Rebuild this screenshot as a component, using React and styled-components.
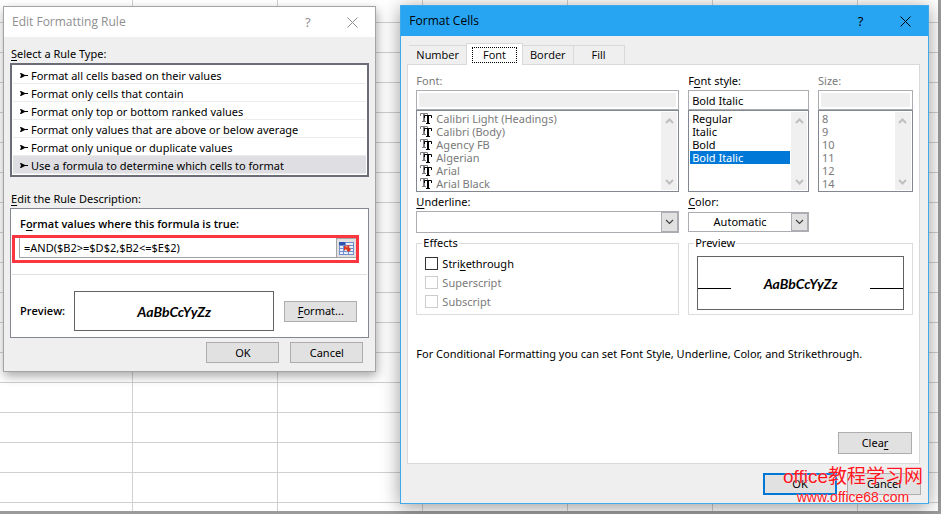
import React, { useState } from 'react'
import styled, { createGlobalStyle, css } from 'styled-components'

const rules = [
    'Format all cells based on their values',
    'Format only cells that contain',
    'Format only top or bottom ranked values',
    'Format only values that are above or below average',
    'Format only unique or duplicate values',
    'Use a formula to determine which cells to format',
]

const fonts = ['Calibri Light (Headings)', 'Calibri (Body)', 'Agency FB', 'Algerian', 'Arial', 'Arial Black']
const styles = ['Regular', 'Italic', 'Bold', 'Bold Italic']
const sizes = ['8', '9', '10', '11', '12', '14']
const tabs = ['Number', 'Font', 'Border', 'Fill']

function CloseIcon() {
    return (
        <svg width="11" height="11" viewBox="0 0 11 11" fill="none" stroke="currentColor" aria-hidden="true">
            <path d="M0.5 0.5L10.5 10.5M10.5 0.5L0.5 10.5" />
        </svg>
    )
}

function Chevron({ up, thick }) {
    return (
        <svg width="9" height="6" viewBox="0 0 9 6" fill="none" stroke="currentColor" strokeWidth={thick ? 2 : 1.2} aria-hidden="true">
            <path d={up ? 'M1 5L4.5 1.5L8 5' : 'M1 1L4.5 4.5L8 1'} />
        </svg>
    )
}

function RuleArrow() {
    return (
        <svg width="8" height="5" viewBox="0 0 8 5" aria-hidden="true">
            <path d="M0 0H1L5 2H8V3H5L1 5H0L1 2.5Z" fill="#000" />
        </svg>
    )
}

function FontIcon() {
    return (
        <svg width="12" height="13" viewBox="0 0 12 13" fill="none" aria-hidden="true">
            <path d="M0.5 4V1.5H7.5V4M2 9.5H6" stroke="#808080" />
            <path d="M4 2V9" stroke="#808080" strokeWidth="2" />
            <path d="M4.5 6V3.5H11.5V6M6 11.5H10" stroke="#000" />
            <path d="M8 4V11" stroke="#000" strokeWidth="2" />
        </svg>
    )
}

function RangeIcon() {
    return (
        <svg width="15" height="13" viewBox="0 0 15 13" aria-hidden="true">
            <rect width="15" height="13" fill="#6f8fd0" />
            <rect width="6" height="3" fill="#2c55b0" />
            <path d="M1 4H4V6H1ZM5 4H9V6H5ZM10 4H14V6H10ZM1 7H4V9H1ZM5 7H9V9H5ZM11 7H14V9H11ZM1 10H4V12H1ZM5 10H9V12H5ZM10 10H14V12H10ZM7 1H14V3H7Z" fill="#e9effb" />
            <path d="M5 4L11 3L10 5L12 8L9 10L7 7L5 9Z" fill="#d9391f" />
            <path d="M6 4L9 4L8 6Z" fill="#f08a70" />
        </svg>
    )
}

function TitleBar({ title, active }) {
    return (
        <Title $active={active}>
            <h1>{title}</h1>
            <TitleButton aria-label="Help">?</TitleButton>
            <TitleButton aria-label="Close"><CloseIcon /></TitleButton>
        </Title>
    )
}

function ListBox({ label, items, selected, disabled, icon, onSelect }) {
    return (
        <List>
            <Options role="listbox" aria-label={label} aria-disabled={disabled}>
                {items.map((item) => (
                    <Option
                        key={item}
                        role="option"
                        aria-selected={item === selected}
                        $selected={item === selected}
                        $disabled={disabled}
                        onClick={() => !disabled && onSelect(item)}
                    >
                        {icon && <FontIcon />}
                        {item}
                    </Option>
                ))}
            </Options>
            <ScrollBar>
                <button aria-label={`Scroll ${label} up`}><Chevron up thick /></button>
                <button aria-label={`Scroll ${label} down`}><Chevron thick /></button>
            </ScrollBar>
        </List>
    )
}

function EditRuleDialog() {
    const [rule, setRule] = useState(rules[5])
    const [formula, setFormula] = useState('=AND($B2>=$D$2,$B2<=$E$2)')

    return (
        <RuleWindow role="dialog" aria-label="Edit Formatting Rule">
            <TitleBar title="Edit Formatting Rule" />
            <RuleBody>
                <SectionLabel><u>S</u>elect a Rule Type:</SectionLabel>
                <RuleList role="listbox" aria-label="Select a Rule Type">
                    {rules.map((item) => (
                        <Rule
                            key={item}
                            role="option"
                            aria-selected={item === rule}
                            $selected={item === rule}
                            onClick={() => setRule(item)}
                        >
                            <RuleArrow />
                            {item}
                        </Rule>
                    ))}
                </RuleList>
                <SectionLabel $second><u>E</u>dit the Rule Description:</SectionLabel>
                <Description>
                    <FormulaLabel htmlFor="formula">F<u>o</u>rmat values where this formula is true:</FormulaLabel>
                    <FormulaBox>
                        <input id="formula" value={formula} onChange={(e) => setFormula(e.target.value)} />
                        <button aria-label="Collapse dialog"><RangeIcon /></button>
                    </FormulaBox>
                    <Divider />
                    <PreviewRow>
                        <b>Preview:</b>
                        <Sample>AaBbCcYyZz</Sample>
                        <Button><span><u>F</u>ormat...</span></Button>
                    </PreviewRow>
                </Description>
                <RuleButtons>
                    <Button>OK</Button>
                    <Button>Cancel</Button>
                </RuleButtons>
            </RuleBody>
        </RuleWindow>
    )
}

function FormatCellsDialog() {
    const [tab, setTab] = useState('Font')
    const [style, setStyle] = useState('Bold Italic')

    return (
        <CellsWindow role="dialog" aria-label="Format Cells">
            <TitleBar title="Format Cells" active />
            <CellsBody>
                <Tabs role="tablist">
                    {tabs.map((name) => (
                        <Tab key={name} role="tab" aria-selected={name === tab} $selected={name === tab} onClick={() => setTab(name)}>
                            <span>{name}</span>
                        </Tab>
                    ))}
                </Tabs>
                <Panel role="tabpanel">
                    <Columns>
                        <Field>
                            <FieldLabel htmlFor="font" $disabled>Font:</FieldLabel>
                            <TextBox id="font" disabled />
                            <ListBox label="Font" items={fonts} disabled icon />
                        </Field>
                        <Field>
                            <FieldLabel htmlFor="style">F<u>o</u>nt style:</FieldLabel>
                            <TextBox id="style" value={style} onChange={(e) => setStyle(e.target.value)} />
                            <ListBox label="Font style" items={styles} selected={style} onSelect={setStyle} />
                        </Field>
                        <Field>
                            <FieldLabel htmlFor="size" $disabled>Size:</FieldLabel>
                            <TextBox id="size" disabled />
                            <ListBox label="Size" items={sizes} disabled />
                        </Field>
                        <Field>
                            <FieldLabel htmlFor="underline"><u>U</u>nderline:</FieldLabel>
                            <Combo>
                                <select id="underline" defaultValue="">
                                    <option value=""></option>
                                    <option>Single</option>
                                    <option>Double</option>
                                </select>
                                <ComboArrow><Chevron /></ComboArrow>
                            </Combo>
                        </Field>
                        <Field>
                            <FieldLabel htmlFor="color"><u>C</u>olor:</FieldLabel>
                            <Combo $small>
                                <select id="color">
                                    <option>Automatic</option>
                                </select>
                                <ComboArrow><Chevron /></ComboArrow>
                            </Combo>
                        </Field>
                    </Columns>
                    <Groups>
                        <Group>
                            <legend>Effects</legend>
                            <Check><input type="checkbox" /><span>Stri<u>k</u>ethrough</span></Check>
                            <Check $disabled><input type="checkbox" disabled /><span>Superscript</span></Check>
                            <Check $disabled><input type="checkbox" disabled /><span>Subscript</span></Check>
                        </Group>
                        <Group>
                            <legend>Preview</legend>
                            <LinedSample>AaBbCcYyZz</LinedSample>
                        </Group>
                    </Groups>
                    <Note>For Conditional Formatting you can set Font Style, Underline, Color, and Strikethrough.</Note>
                    <ClearRow>
                        <Button $wide><span>Clea<u>r</u></span></Button>
                    </ClearRow>
                </Panel>
                <CellsButtons>
                    <Button $wide $primary>OK</Button>
                    <Button $wide>Cancel</Button>
                </CellsButtons>
            </CellsBody>
        </CellsWindow>
    )
}

function App() {
    return (
        <>
            <GlobalStyle />
            <Sheet>
                <EditRuleDialog />
                <FormatCellsDialog />
                <Watermark>
                    <strong>office教程学习网</strong>
                    <a href="#site">www.office68.com</a>
                </Watermark>
            </Sheet>
        </>
    )
}

export default App

const GlobalStyle = createGlobalStyle`
    * {
        box-sizing: border-box;
    }

    body {
        margin: 0;
        font-family: "Noto Sans", "Open Sans", sans-serif;
        font-size: 11px;
        line-height: 16px;
        color: #000;
    }

    button, input, select {
        margin: 0;
        padding: 0;
        border: none;
        border-radius: 0;
        font: inherit;
        color: inherit;
    }

    svg {
        flex: none;
        display: block;
    }

    u {
        text-underline-offset: 2px;
    }
`

const Sheet = styled.main`
    position: relative;
    display: flex;
    align-items: flex-start;
    gap: 24px;
    min-height: 100vh;
    padding: 5px 9px 7px 3px;
    border: solid #9b9b9b;
    border-width: 0 3px 3px 0;
    background-color: #fff;
    background-image:
        linear-gradient(to right, #d0d0d0 1px, transparent 1px),
        linear-gradient(to bottom, #d0d0d0 1px, transparent 1px);
    background-size: 145px 100%, 100% 30px;
    background-position: 132px 0, 0 22px;
`

const Window = styled.section`
    min-width: 0;
    border: 1px solid #a4a4a4;
    background-color: #efefef;
`

const RuleWindow = styled(Window)`
    flex: 373 1 0;
    margin-top: 1px;
    box-shadow: 1px 4px 10px rgba(0, 0, 0, 0.35);
`

const CellsWindow = styled(Window)`
    flex: 529 1 0;
    border-color: #3fa9ec;
    box-shadow: 0 3px 18px rgba(0, 0, 0, 0.4);
`

const Title = styled.header`
    display: flex;
    align-items: center;
    height: 30px;
    padding-left: 8px;
    background-color: ${({ $active }) => ($active ? '#27a5f3' : '#fff')};
    color: ${({ $active }) => ($active ? '#000' : '#8f8f8f')};

    h1 {
        flex: 1;
        margin: 0;
        font-family: "Open Sans", sans-serif;
        font-size: 12px;
        font-weight: 400;
    }
`

const TitleButton = styled.button`
    display: flex;
    align-items: center;
    justify-content: center;
    width: 45px;
    height: 30px;
    background: none;
    font-size: 13px;
`

const RuleBody = styled.div`
    padding: 9px 6px 8px;
`

const SectionLabel = styled.div`
    margin: ${({ $second }) => ($second ? '14px' : '0')} 0 1px;
    padding-left: 1px;
`

const RuleList = styled.ul`
    margin: 0;
    padding: 1px;
    border: 2px solid #6a6d75;
    background-color: #fff;
    list-style: none;
`

const Rule = styled.li`
    display: flex;
    align-items: center;
    gap: 3px;
    height: 18px;
    padding: 2px 0 0 7px;
    border-bottom: 1px solid #ececec;
    white-space: nowrap;
    background-color: ${({ $selected }) => ($selected ? '#dfdfe3' : '#fff')};
`

const Description = styled.div`
    padding: 7px 0 6px;
    border: 1px solid #828790;
    background-color: #fff;
`

const FormulaLabel = styled.label`
    display: block;
    margin-bottom: 3px;
    padding-left: 9px;
    font-family: "Open Sans", sans-serif;
    font-weight: 600;
`

const FormulaBox = styled.div`
    display: flex;
    align-items: flex-start;
    height: 28px;
    margin: 0 9px 0 1px;
    padding-left: 4px;
    border: 3px solid #fb3640;

    input {
        flex: 1;
        min-width: 0;
        height: 20px;
        padding-left: 4px;
        border: solid #a4a4a4;
        border-width: 0 0 1px 1px;
        outline: none;
    }

    button {
        display: flex;
        align-items: center;
        justify-content: center;
        width: 20px;
        height: 20px;
        border: solid #a4a4a4;
        border-width: 1px 0 1px 1px;
        background-color: #e1e1e1;
    }
`

const Divider = styled.hr`
    height: 1px;
    margin: 11px 1px 16px;
    border: none;
    background-color: #dfdfe3;
`

const PreviewRow = styled.div`
    display: flex;
    align-items: center;
    padding: 0 11px 0 9px;

    b {
        width: 54px;
        font-family: "Open Sans", sans-serif;
        font-weight: 600;
    }
`

const Sample = styled.div`
    display: flex;
    flex: 1;
    align-items: center;
    justify-content: center;
    height: 40px;
    margin-right: 10px;
    border: 1px solid #636363;
    font: italic 700 14px Lato, sans-serif;
`

const Button = styled.button`
    width: ${({ $wide }) => ($wide ? '74px' : '73px')};
    height: ${({ $wide }) => ($wide ? '22px' : '21px')};
    border: 1px solid #adadad;
    background-color: #e1e1e1;

    ${({ $primary }) => $primary && css`
        border: 2px solid #0078d7;
    `}
`

const RuleButtons = styled.div`
    display: flex;
    justify-content: flex-end;
    gap: 11px;
    padding: 4px 6px 0 0;
`

const CellsBody = styled.div`
    padding: 7px 8px 8px 6px;
`

const Tabs = styled.div`
    display: flex;
    align-items: flex-end;
    padding-left: 2px;
`

const Tab = styled.button`
    height: 19px;
    padding: 0 7px;
    border: solid #d9d9d9;
    border-width: 1px 1px 0 0;
    background-color: #efefef;
    font-family: "Open Sans", sans-serif;

    &:first-child {
        border-right: none;
    }

    &:last-child {
        padding: 0 18px;
    }

    ${({ $selected }) => $selected && css`
        z-index: 1;
        height: 22px;
        margin-bottom: -1px;
        padding: 0 5px;
        border-left-width: 1px;
        background-color: #fff;

        span {
            display: block;
            padding: 0 10px;
            border: 1px dotted #000;
            line-height: 14px;
        }
    `}
`

const Panel = styled.div`
    padding: 8px 6px 9px 8px;
    border: 1px solid #d9d9d9;
    background-color: #fff;
`

const Columns = styled.div`
    display: grid;
    grid-template-columns: 263fr 121fr 95fr;
    column-gap: 9px;
    row-gap: 2px;
`

const Field = styled.div`
    display: flex;
    flex-direction: column;
    min-width: 0;
`

const FieldLabel = styled.label`
    margin-bottom: 1px;
    color: ${({ $disabled }) => ($disabled ? '#7a7a7a' : '#000')};
`

const TextBox = styled.input`
    width: 100%;
    height: 20px;
    padding: 0 3px;
    border: 1px solid #abadb3;
    background-color: #fff;

    &:disabled {
        border-color: #abadb3;
        background-color: #efefef;
        box-shadow: inset 0 0 0 2px #fff;
    }
`

const List = styled.div`
    display: flex;
    height: 82px;
    padding: 1px;
    border: 1px solid #828790;
`

const Options = styled.ul`
    flex: 1;
    min-width: 0;
    margin: 0 1px 0 0;
    padding: 0;
    list-style: none;
`

const Option = styled.li`
    display: flex;
    gap: 4px;
    height: 13px;
    padding-left: 2px;
    line-height: 13px;
    white-space: nowrap;
    color: ${({ $selected, $disabled }) => ($selected ? '#fff' : $disabled ? '#7a7a7a' : '#000')};
    background-color: ${({ $selected }) => ($selected ? '#0078d7' : '#fff')};
`

const ScrollBar = styled.div`
    display: flex;
    flex-direction: column;
    justify-content: space-between;
    width: 16px;
    background-color: #f0f0f0;

    button {
        display: flex;
        align-items: center;
        justify-content: center;
        height: 17px;
        background: none;
        color: #bfbfbf;
    }
`

const Combo = styled.div`
    display: flex;
    height: ${({ $small }) => ($small ? '20px' : '22px')};
    margin-top: ${({ $small }) => ($small ? '1px' : '0')};
    border: 1px solid #abadb3;

    select {
        flex: 1;
        min-width: 0;
        margin-right: -17px;
        padding: 0 17px 0 0;
        appearance: none;
        background: none;
        text-align: center;
        text-align-last: center;
    }
`

const ComboArrow = styled.span`
    display: flex;
    align-items: center;
    justify-content: center;
    width: 17px;
    border: 1px solid #abadb3;
    background-color: #e1e1e1;
    color: #404040;
    pointer-events: none;
`

const Groups = styled.div`
    display: grid;
    grid-template-columns: 263fr 225fr;
    column-gap: 9px;
    margin-top: 2px;
`

const Group = styled.fieldset`
    min-width: 0;
    height: 80px;
    margin: 0;
    padding: 5px 8px 4px;
    border: 1px solid #dcdcdc;

    legend {
        margin-left: -3px;
        padding: 0 1px;
    }
`

const Check = styled.label`
    display: flex;
    align-items: center;
    gap: 4px;
    height: 19px;
    color: ${({ $disabled }) => ($disabled ? '#7a7a7a' : '#000')};

    legend + & {
        margin-top: -2px;
    }

    input {
        width: 13px;
        height: 13px;
        border: 1px solid ${({ $disabled }) => ($disabled ? '#cccccc' : '#333')};
        appearance: none;
        background-color: #fff;
    }

    input:checked {
        box-shadow: inset 0 0 0 2px #fff;
        background-color: #333;
    }
`

const LinedSample = styled(Sample)`
    height: 54px;
    margin: 0;
    justify-content: space-between;

    &:before, &:after {
        content: "";
        width: 33px;
        height: 1px;
        margin-top: 11px;
        background-color: #000;
    }
`

const Note = styled.p`
    margin: 31px 0 70px;
`

const ClearRow = styled.div`
    display: flex;
    justify-content: flex-end;
    padding-right: 1px;
`

const CellsButtons = styled.div`
    display: flex;
    justify-content: flex-end;
    gap: 10px;
    margin: 9px -1px 0 0;
`

const Watermark = styled.div`
    position: absolute;
    right: 15px;
    bottom: 6px;
    display: flex;
    flex-direction: column;
    align-items: center;
    font-family: "Liberation Sans", "Noto Sans CJK SC", sans-serif;
    color: #ff1420;
    text-shadow: 0 0 1px #fff;

    strong {
        font-size: 19px;
        font-weight: 400;
        line-height: 24px;
    }

    a {
        font-size: 14px;
        line-height: 16px;
        color: inherit;
        text-decoration: none;
    }
`
